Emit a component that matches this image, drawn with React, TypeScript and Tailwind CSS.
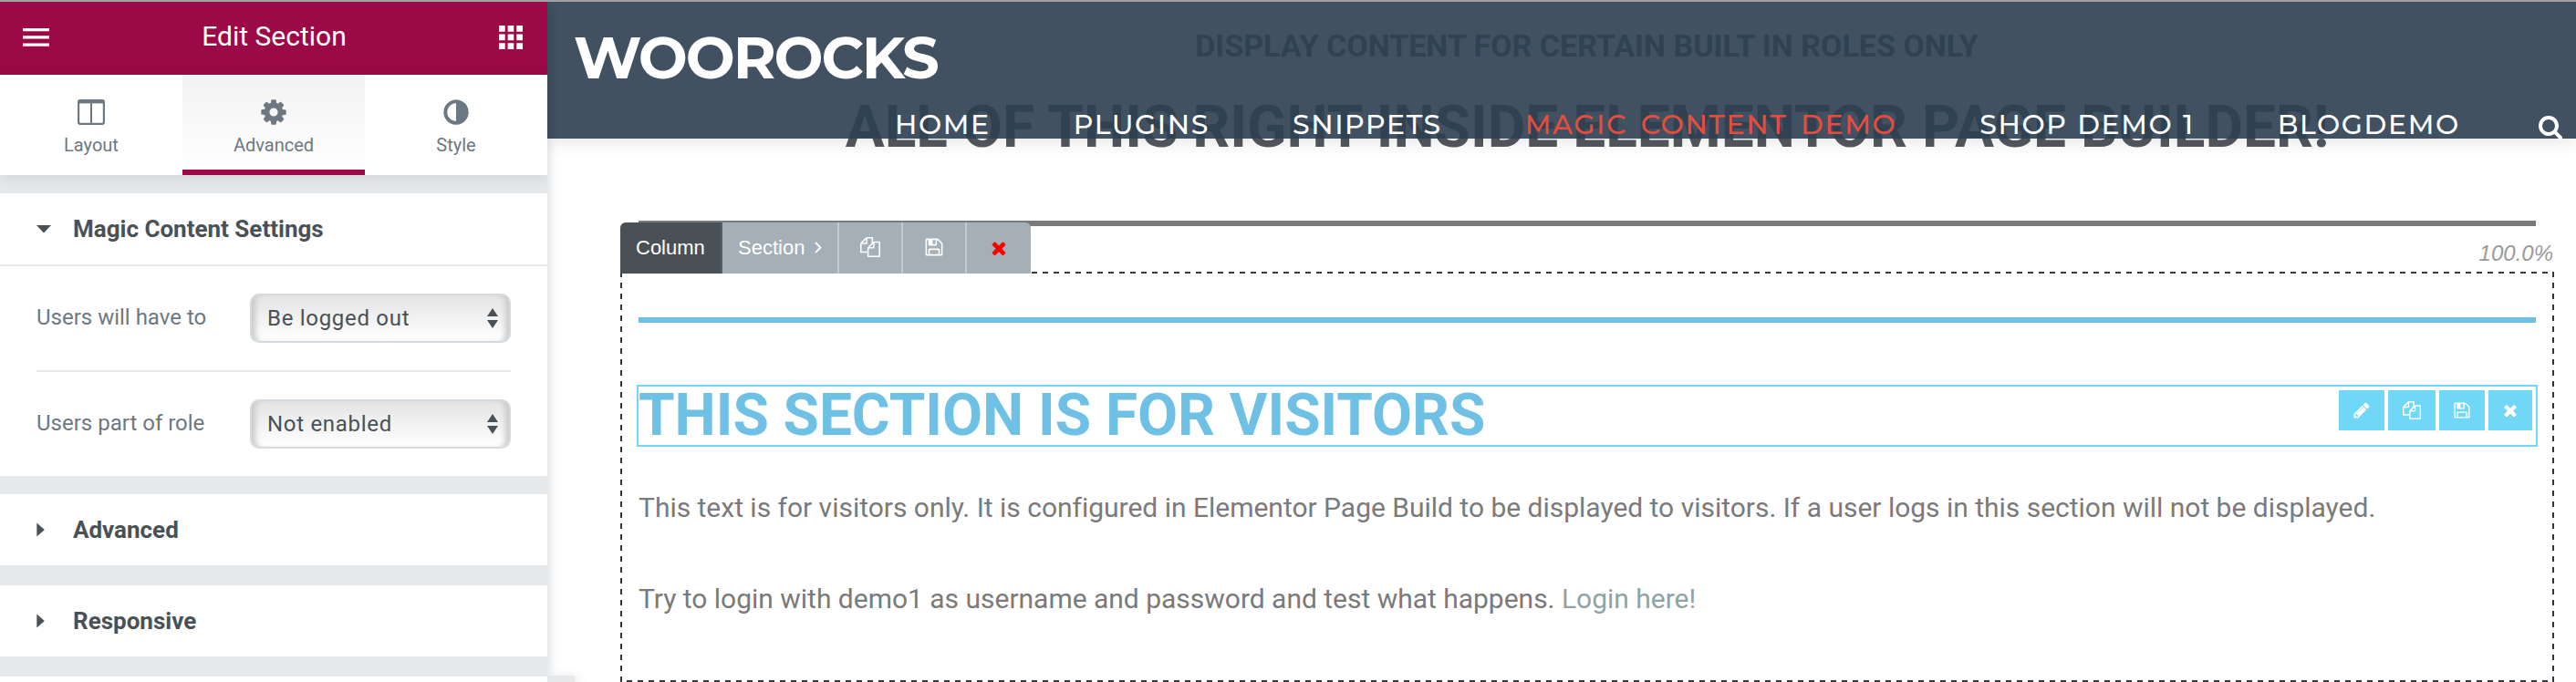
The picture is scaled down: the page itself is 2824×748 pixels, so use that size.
import type { ReactNode } from "react";

const P = {
  files: "M1696 384q40 0 68 28t28 68v1216q0 40-28 68t-68 28h-960q-40 0-68-28t-28-68v-288h-544q-40 0-68-28t-28-68v-672q0-40 20-88t48-76l408-408q28-28 76-48t88-20h416q40 0 68 28t28 68v328q68-40 128-40h416zm-544 213l-299 299h299v-299zm-640-384l-299 299h299v-299zm196 647l316-316v-416h-384v416q0 40-28 68t-68 28h-416v640h512v-256q0-40 20-88t48-76zm956 804v-1152h-384v416q0 40-28 68t-68 28h-416v640h896z",
  floppy: "M512 1536h768v-384h-768v384zm896 0h128v-896q0-14-10-38.5t-20-34.5l-281-281q-10-10-34-20t-39-10v416q0 40-28 68t-68 28h-576q-40 0-68-28t-28-68v-416h-128v1280h128v-416q0-40 28-68t68-28h832q40 0 68 28t28 68v416zm-384-928v-320q0-13-9.5-22.5t-22.5-9.5h-192q-13 0-22.5 9.5t-9.5 22.5v320q0 13 9.5 22.5t22.5 9.5h192q13 0 22.5-9.5t9.5-22.5zm640 32v928q0 40-28 68t-68 28h-1344q-40 0-68-28t-28-68v-1344q0-40 28-68t68-28h928q40 0 88 20t76 48l280 280q28 28 48 76t20 88z",
  times: "M1490 1322q0 40-28 68l-136 136q-28 28-68 28t-68-28l-294-294-294 294q-28 28-68 28t-68-28l-136-136q-28-28-28-68t28-68l294-294-294-294q-28-28-28-68t28-68l136-136q28-28 68-28t68 28l294 294 294-294q28-28 68-28t68 28l136 136q28 28 28 68t-28 68l-294 294 294 294q28 28 28 68z",
  pencil: "M491 1536l91-91-235-235-91 91v107h128v128h107zm523-928q0-22-22-22-10 0-17 7l-542 542q-7 7-7 17 0 22 22 22 10 0 17-7l542-542q7-7 7-17zm-54-192l416 416-832 832h-416v-416zm683 96q0 53-37 90l-166 166-416-416 166-165q36-38 90-38 53 0 91 38l235 234q37 39 37 91z",
  search: "M1216 832q0-185-131.5-316.5t-316.5-131.5-316.5 131.5-131.5 316.5 131.5 316.5 316.5 131.5 316.5-131.5 131.5-316.5zm512 832q0 52-38 90t-90 38q-54 0-90-38l-343-342q-179 124-399 124-143 0-273.5-55.5t-225-150-150-225-55.5-273.5 55.5-273.5 150-225 225-150 273.5-55.5 273.5 55.5 225 150 150 225 55.5 273.5q0 220-124 399l343 343q37 37 37 90z",
  adjust: "M896 1440v-1088q-148 0-273 73t-198 198-73 273 73 273 198 198 273 73zm768-544q0 209-103 385.5t-279.5 279.5-385.5 103-385.5-103-279.5-279.5-103-385.5 103-385.5 279.5-279.5 385.5-103 385.5 103 279.5 279.5 103 385.5z",
  gear: "M1152 896q0-106-75-181t-181-75-181 75-75 181 75 181 181 75 181-75 75-181zm512-109v222q0 12-8 23t-20 13l-185 28q-19 54-39 91 35 50 107 138 10 12 10 25t-9 23q-27 37-99 108t-94 71q-12 0-26-9l-138-108q-44 23-91 38-16 136-29 186-7 28-36 28h-222q-14 0-24.5-8.5t-11.5-21.5l-28-184q-49-16-90-37l-141 107q-10 9-25 9-14 0-25-11-126-114-165-168-7-10-7-23 0-12 8-23 15-21 51-66.5t54-70.5q-27-50-41-99l-183-27q-13-2-21-12.5t-8-23.5v-222q0-12 8-23t19-13l186-28q14-46 39-92-40-57-107-138-10-12-10-24 0-10 9-23 26-36 98.5-107.5t94.5-71.5q13 0 26 10l138 107q44-23 91-38 16-136 29-186 7-28 36-28h222q14 0 24.5 8.5t11.5 21.5l28 184q49 16 90 37l142-107q9-9 24-9 13 0 25 10 129 119 165 170 7 8 7 22 0 12-8 23-15 21-51 66.5t-54 70.5q26 50 41 98l183 28q13 2 21 12.5t8 23.5z",
};

function Icon({ name, className }: { name: keyof typeof P; className: string }) {
  return (
    <svg viewBox="0 0 1792 1792" fill="currentColor" className={`shrink-0 ${className}`}>
      <path d={P[name]} />
    </svg>
  );
}

function Columns() {
  return (
    <svg viewBox="0 0 30 28" className="h-7 w-[30px]" fill="none" stroke="currentColor">
      <rect x="1.1" y="1.1" width="27.8" height="25.800" rx="1.800" strokeWidth="2.200" />
      <path d="M1 2.600h28" strokeWidth="3.600" />
      <path d="M15 4v22" strokeWidth="2" />
    </svg>
  );
}

function Tab({ label, active, children }: { label: string; active?: boolean; children: ReactNode }) {
  return (
    <div
      className={`flex w-[200px] flex-col items-center pt-[25px] text-[#6d7882] ${
        active ? "border-b-[6px] border-[#9b0a46] bg-linear-to-b from-[#f2f2f2] to-white" : ""
      }`}
    >
      <div className="flex h-8 items-center">{children}</div>
      <div className="mt-[7px] text-[20px] leading-[26px]">{label}</div>
    </div>
  );
}

function Select({ value }: { value: string }) {
  return (
    <div className="flex h-[54px] w-[286px] items-center justify-between rounded-[10px] border-2 border-[#d5dadf] bg-linear-to-b from-[#e4e4e4] to-white pl-[17px] pr-[12px] text-[24px] tracking-[0.7px] text-[#495157] shadow-[inset_8px_0_6px_-4px_#c8c9ca,inset_-8px_0_6px_-4px_#c8c9ca]">
      <span>{value}</span>
      <svg viewBox="0 0 12 22" className="h-[22px] w-3" fill="currentColor">
        <path d="M6 0l6 9H0zM6 22l6-9H0z" />
      </svg>
    </div>
  );
}

function Field({ label, value }: { label: string; value: string }) {
  return (
    <div className="flex h-[114px] items-center justify-between text-[24px] text-[#6d7882]">
      <span className="-mt-[3px]">{label}</span>
      <Select value={value} />
    </div>
  );
}

function SectionHead({ label, open }: { label: string; open?: boolean }) {
  return (
    <div className="flex h-[78px] items-center bg-white pl-10 text-[26px] font-bold text-[#495157]">
      <svg viewBox="0 0 16 16" className="mr-6 size-4" fill="currentColor">
        <path d={open ? "M0 4h16l-8 8.5z" : "M0.300 0.500l8.500 7.500-8.500 7.500z"} />
      </svg>
      <span>{label}</span>
    </div>
  );
}

function Sidebar() {
  return (
    <aside className="relative z-30 h-[746px] w-[600px] shrink-0 overflow-hidden bg-[#e6e9ec]">
      <div className="flex h-20 items-center justify-between bg-[#9b0a46] pl-[25px] pr-[27px] text-white">
        <svg viewBox="0 0 29 20" className="-mt-0.5 h-5 w-[29px]" fill="currentColor">
          <path d="M0 0h29v3.300H0zM0 8.200h29v3.300H0zM0 16.400h29v3.300H0z" />
        </svg>
        <span className="-mt-[6px] text-[30px]">Edit Section</span>
        <svg viewBox="0 0 26 26" className="-mt-0.5 size-[26px]" fill="currentColor">
          <path d="M0 0h6.700v6.700H0zM9.600 0h6.700v6.700H9.600zM19.300 0H26v6.700h-6.700zM0 9.600h6.700v6.700H0zM9.600 9.600h6.700v6.700H9.600zM19.300 9.600H26v6.700h-6.700zM0 19.300h6.700V26H0zM9.600 19.300h6.700V26H9.600zM19.300 19.300H26V26h-6.700z" />
        </svg>
      </div>
      <div className="relative flex h-[110px] bg-white shadow-[0_2px_16px_rgba(0,0,0,0.1)]">
        <Tab label="Layout"><Columns /></Tab>
        <Tab label="Advanced" active><Icon name="gear" className="size-8" /></Tab>
        <Tab label="Style"><Icon name="adjust" className="size-8" /></Tab>
      </div>
      <div className="mt-5">
        <SectionHead label="Magic Content Settings" open />
        <div className="h-[232px] border-t-2 border-[#e6e9ec] bg-white px-10">
          <Field label="Users will have to" value="Be logged out" />
          <div className="h-0.5 bg-[#e6e9ec]" />
          <Field label="Users part of role" value="Not enabled" />
        </div>
      </div>
      <div className="mt-5"><SectionHead label="Advanced" /></div>
      <div className="mt-[22px]"><SectionHead label="Responsive" /></div>
      <div className="mt-[22px] h-[6px] bg-white" />
    </aside>
  );
}

const NAV = [
  { label: "HOME", style: "" },
  { label: "PLUGINS", style: "" },
  { label: "SNIPPETS", style: "" },
  { label: "MAGIC CONTENT DEMO", style: "text-[#e74c3c] [word-spacing:5px]" },
  { label: "SHOP DEMO 1", style: "[word-spacing:1px]" },
  { label: "BLOGDEMO", style: "" },
];

function Header() {
  return (
    <header className="absolute inset-x-0 top-0 z-10 h-[150px] bg-[#2c3e50]/90 font-['Montserrat','Lato',sans-serif] text-white shadow-[0_2px_20px_rgba(0,0,0,0.12)]">
      <div className="h-[115px] pt-[22px] pl-[29px] text-[64px] leading-[78px] font-bold tracking-[-2.1px]">WOOROCKS</div>
      <nav className="flex h-10 items-center justify-between pr-[14px] pl-[381px] text-[30px] leading-10 font-medium tracking-[1.6px] whitespace-nowrap">
        <div className="flex gap-[91px]">
          {NAV.map((n) => (
            <span key={n.label} className={n.style}>{n.label}</span>
          ))}
        </div>
        <Icon name="search" className="mt-[3px] size-[28px]" />
      </nav>
    </header>
  );
}

function Main() {
  return (
    <main className="relative h-[746px] w-[2224px] overflow-hidden bg-white">
      <Header />
      <div className="flex flex-col items-center pl-[56px] text-center font-bold whitespace-nowrap text-[#54595f]">
        <div className="mt-[28px] -ml-[1px] text-[34px] leading-[40px]">DISPLAY CONTENT FOR CERTAIN BUILT IN ROLES ONLY</div>
        <div className="mt-[35px] text-[64px] leading-[70px]">ALL OF THIS RIGHT INSIDE ELEMENTOR PAGE BUILDER!</div>
      </div>
      <div className="mt-[67px] ml-[100px] h-[6px] w-[2080px] bg-[#7a7a7a]" />
      <div className="-mt-1 ml-20 flex h-14 w-[2120px] items-start justify-between">
        <div className="relative z-10 flex h-14 overflow-hidden rounded-t-md bg-[#a4afb7] font-['Liberation_Sans',sans-serif] text-[22px] text-white">
          <div className="flex w-28 items-center border-r-2 border-[#556068] bg-[#495157] pb-px pl-[17px]">Column</div>
          <div className="flex w-32 items-center border-r-2 border-[#c2cbd2] pb-0.5 pl-[17px]">
            Section
            <svg viewBox="0 0 8 13" className="ml-[11px] h-[13px] w-2" fill="none" stroke="currentColor" strokeWidth="1.800"><path d="M1 1l5.500 5.500L1 12" /></svg>
          </div>
          <div className="flex w-[70px] items-center justify-center border-r-2 border-[#c2cbd2] pb-0.5"><Icon name="files" className="size-[22px]" /></div>
          <div className="flex w-[70px] items-center justify-center border-r-2 border-[#c2cbd2] pb-0.5"><Icon name="floppy" className="size-[22px]" /></div>
          <div className="flex w-[70px] items-center justify-center text-[#ff0000]"><Icon name="times" className="size-[22px]" /></div>
        </div>
        <span className="mt-[20px] mr-[1px] font-['Liberation_Sans',sans-serif] text-[24px] leading-[28px] text-[#9a9a9a] italic">100.0%</span>
      </div>
      <section className="relative -mt-[2px] ml-20 h-[450px] w-[2120px]">
        <svg className="absolute inset-0 size-full" fill="none" stroke="#33373b" strokeWidth="2" strokeDasharray="6 6">
          <path d="M7 1H2120M7 449H2120M1 0V450M2119 0V450" />
        </svg>
        <div className="pt-[50px] pl-5"><div className="h-[6px] w-[2080px] bg-[#6ec1e4]" /></div>
        <div className="mt-[68px] ml-[18px] flex h-[68px] w-[2084px] items-start justify-between border-2 border-[#71d7f7]">
          <h2 className="text-[64px] leading-[64px] font-bold tracking-[-0.06px] whitespace-nowrap text-[#6ec1e4]">THIS SECTION IS FOR VISITORS</h2>
          <div className="mt-1 mr-1 flex h-11 gap-1 text-white">
            <div className="flex w-[50px] items-center justify-center bg-[#71d7f7]"><Icon name="pencil" className="size-5" /></div>
            <div className="flex w-[52px] items-center justify-center bg-[#71d7f7]"><Icon name="files" className="size-5" /></div>
            <div className="flex w-[50px] items-center justify-center bg-[#71d7f7]"><Icon name="floppy" className="size-5" /></div>
            <div className="flex w-[48px] items-center justify-center bg-[#71d7f7]"><Icon name="times" className="size-5" /></div>
          </div>
        </div>
        <div className="mt-[42px] ml-5 text-[30px] leading-[50px] tracking-[-0.015px] whitespace-nowrap text-[#7a7a7a]">
          <p>This text is for visitors only. It is configured in Elementor Page Build to be displayed to visitors. If a user logs in this section will not be displayed.</p>
          <p className="mt-[50px]">Try to login with demo1 as username and password and test what happens. <a className="text-[#8fa3a5]">Login here!</a></p>
        </div>
      </section>
      <div className="absolute top-0 -left-5 z-20 h-full w-5 shadow-[0_0_14px_rgba(0,0,0,0.18)]" />
      <div className="absolute top-[739px] left-0 z-20 h-10 w-[30px] bg-[#e6e9ec] shadow-[4px_0_12px_rgba(0,0,0,0.08)]" />
    </main>
  );
}

export default function App() {
  return (
    <div className="h-[748px] w-[2824px] overflow-hidden bg-white font-['Roboto',sans-serif]">
      <div className="h-0.5 bg-[#a1a1a1]" />
      <div className="flex">
        <Sidebar />
        <Main />
      </div>
    </div>
  );
}
